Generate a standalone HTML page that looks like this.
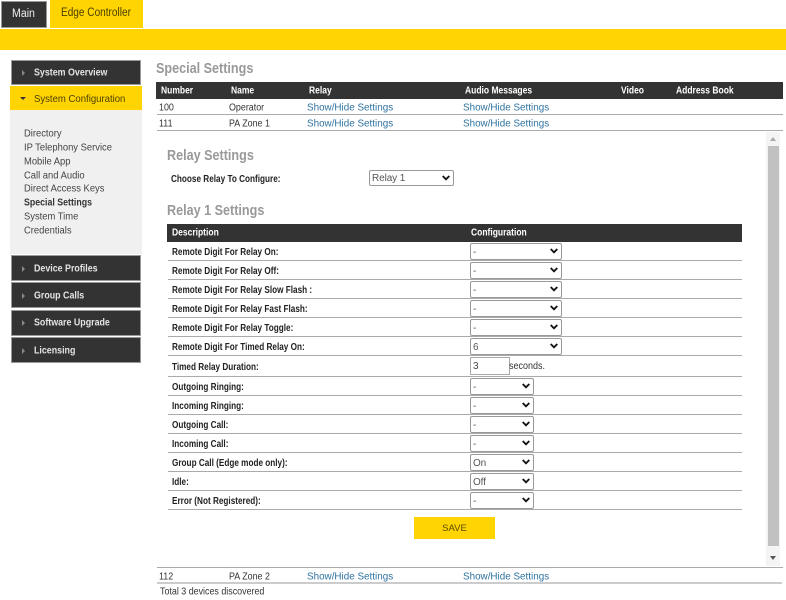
<!DOCTYPE html>
<html><head><meta charset="utf-8"><style>
html,body{margin:0;padding:0;width:786px;height:600px;overflow:hidden;background:#fff}
body{position:relative;font-family:"Liberation Sans",sans-serif;font-size:10px;color:#333}
#w{position:absolute;inset:0;filter:blur(.35px)}
.a{position:absolute;white-space:nowrap}
.t{position:absolute;white-space:nowrap;line-height:14px;font-size:10px;transform-origin:0 50%;transform:translateY(1.5px) scaleX(.89)}
.d{background:#333;color:#ddd}
.y{background:#ffd400}
.nav{position:absolute;left:11px;width:130px;background:#333;border:1px solid #999;box-sizing:border-box;height:24px}
.nt{position:absolute;left:34px;color:#e4e4e4;font-weight:bold;font-size:10.2px;line-height:14px;white-space:nowrap;transform-origin:0 50%;transform:translateY(1.5px) scaleX(.87)}
.tri{position:absolute;left:22px;width:0;height:0;border-left:3px solid #888;border-top:3px solid transparent;border-bottom:3px solid transparent;transform:translateY(1px)}
.m{position:absolute;left:24px;color:#444;font-size:10px;line-height:14px;white-space:nowrap;transform-origin:0 50%;transform:translateY(1.5px) scaleX(.94)}
.h{position:absolute;color:#fff;font-weight:bold;font-size:10px;line-height:14px;white-space:nowrap;transform-origin:0 50%;transform:translateY(1.5px) scaleX(.85)}
.l{position:absolute;height:1px;background:#aaa}
.t.link{color:#2f72a0;transform:translateY(1.5px) scaleX(.987)}
.lb{position:absolute;left:172px;font-weight:bold;color:#222;font-size:10.5px;line-height:14px;white-space:nowrap;transform-origin:0 50%;transform:translateY(0) scaleX(.78)}
.ttl{position:absolute;color:#999;font-weight:bold;font-size:15px;line-height:18px;white-space:nowrap;transform-origin:0 50%;transform:translateY(1px) scaleX(.84)}
select{position:absolute;box-sizing:border-box;height:17px;font-family:"Liberation Sans",sans-serif;font-size:10px;color:#555;background:#fff;border:1px solid #999;border-radius:2px;padding:1px 0 0 2px;margin:0;appearance:none;-webkit-appearance:none;letter-spacing:-.1px}
svg.c{position:absolute;width:8px;height:6px;pointer-events:none}
</style></head><body><div id="w">
<div class="a d" style="left:1px;top:1px;width:46px;height:27px;box-sizing:border-box;border:1px solid #999"></div>
<div class="a" style="left:12px;top:7px;color:#eee;font-size:11.5px;line-height:14px;transform-origin:0 50%;transform:scaleX(.92)">Main</div>
<div class="a y" style="left:50px;top:0;width:93px;height:28px"></div>
<div class="a" style="left:61px;top:6px;color:#4a3f00;font-size:11.5px;line-height:14px;transform-origin:0 50%;transform:scaleX(.875)">Edge Controller</div>
<div class="a y" style="left:0;top:29px;width:786px;height:21px"></div>

<div class="nav" style="top:60px;height:25px"></div>
<div class="tri" style="top:69px"></div><div class="nt" style="top:65px">System Overview</div>
<div class="a y" style="left:10px;top:86px;width:132px;height:24px"></div>
<div class="a" style="left:20px;top:97px;border-top:3px solid #333;border-left:3px solid transparent;border-right:3px solid transparent"></div>
<div class="a" style="left:34px;top:92px;color:#4a3f00;font-size:10.5px;line-height:14px;transform-origin:0 50%;transform:scaleX(.91)">System Configuration</div>
<div class="a" style="left:10px;top:110px;width:132px;height:144px;background:#f0f0f0"></div>
<div class="m" style="top:126px">Directory</div>
<div class="m" style="top:140px">IP Telephony Service</div>
<div class="m" style="top:154px">Mobile App</div>
<div class="m" style="top:168px">Call and Audio</div>
<div class="m" style="top:181px">Direct Access Keys</div>
<div class="m" style="top:195px;font-weight:bold;color:#333;transform:translateY(1.5px) scaleX(.88)">Special Settings</div>
<div class="m" style="top:209px">System Time</div>
<div class="m" style="top:223px">Credentials</div>
<div class="nav" style="top:255px;height:26px"></div><div class="tri" style="top:265px"></div><div class="nt" style="top:261px">Device Profiles</div>
<div class="nav" style="top:282px;height:26px"></div><div class="tri" style="top:292px"></div><div class="nt" style="top:288px">Group Calls</div>
<div class="nav" style="top:310px;height:26px"></div><div class="tri" style="top:319px"></div><div class="nt" style="top:315px">Software Upgrade</div>
<div class="nav" style="top:337px;height:26px"></div><div class="tri" style="top:347px"></div><div class="nt" style="top:343px">Licensing</div>

<div class="ttl" style="left:156px;top:59px">Special Settings</div>
<div class="a d" style="left:156px;top:82px;width:627px;height:17px"></div>
<div class="h" style="left:161px;top:83px">Number</div>
<div class="h" style="left:231px;top:83px">Name</div>
<div class="h" style="left:309px;top:83px">Relay</div>
<div class="h" style="left:465px;top:83px">Audio Messages</div>
<div class="h" style="left:621px;top:83px">Video</div>
<div class="h" style="left:676px;top:83px">Address Book</div>
<div class="t" style="left:159px;top:100px">100</div><div class="t" style="left:229px;top:100px">Operator</div>
<div class="t link" style="left:307px;top:100px">Show/Hide Settings</div><div class="t link" style="left:463px;top:100px">Show/Hide Settings</div>
<div class="l" style="left:157px;top:114px;width:626px"></div>
<div class="t" style="left:159px;top:116px">111</div><div class="t" style="left:229px;top:116px">PA Zone 1</div>
<div class="t link" style="left:307px;top:116px">Show/Hide Settings</div><div class="t link" style="left:463px;top:116px">Show/Hide Settings</div>
<div class="l" style="left:157px;top:130px;width:626px"></div>

<div class="ttl" style="left:167px;top:146px">Relay Settings</div>
<div class="lb" style="left:171px;top:172px">Choose Relay To Configure:</div>
<select style="left:369px;top:170px;width:85px;height:16px"><option>Relay 1</option></select><svg class="c" style="left:442px;top:175px" viewBox="0 0 8 6"><path d="M.7 1L4 4.3 7.3 1" fill="none" stroke="#111" stroke-width="1.8"/></svg>
<div class="ttl" style="left:167px;top:201px">Relay 1 Settings</div>
<div class="a d" style="left:167px;top:224px;width:575px;height:18px"></div>
<div class="h" style="left:172px;top:225px">Description</div>
<div class="h" style="left:471px;top:225px">Configuration</div>

<div class="lb" style="top:245px">Remote Digit For Relay On:</div><select style="left:470px;top:243px;width:92px"><option>-</option></select><svg class="c" style="left:550px;top:248px" viewBox="0 0 8 6"><path d="M.7 1L4 4.3 7.3 1" fill="none" stroke="#111" stroke-width="1.8"/></svg><div class="l" style="left:168px;top:260px;width:574px"></div>
<div class="lb" style="top:264px">Remote Digit For Relay Off:</div><select style="left:470px;top:262px;width:92px"><option>-</option></select><svg class="c" style="left:550px;top:267px" viewBox="0 0 8 6"><path d="M.7 1L4 4.3 7.3 1" fill="none" stroke="#111" stroke-width="1.8"/></svg><div class="l" style="left:168px;top:279px;width:574px"></div>
<div class="lb" style="top:283px">Remote Digit For Relay Slow Flash :</div><select style="left:470px;top:281px;width:92px"><option>-</option></select><svg class="c" style="left:550px;top:286px" viewBox="0 0 8 6"><path d="M.7 1L4 4.3 7.3 1" fill="none" stroke="#111" stroke-width="1.8"/></svg><div class="l" style="left:168px;top:298px;width:574px"></div>
<div class="lb" style="top:302px">Remote Digit For Relay Fast Flash:</div><select style="left:470px;top:300px;width:92px"><option>-</option></select><svg class="c" style="left:550px;top:305px" viewBox="0 0 8 6"><path d="M.7 1L4 4.3 7.3 1" fill="none" stroke="#111" stroke-width="1.8"/></svg><div class="l" style="left:168px;top:317px;width:574px"></div>
<div class="lb" style="top:321px">Remote Digit For Relay Toggle:</div><select style="left:470px;top:319px;width:92px"><option>-</option></select><svg class="c" style="left:550px;top:324px" viewBox="0 0 8 6"><path d="M.7 1L4 4.3 7.3 1" fill="none" stroke="#111" stroke-width="1.8"/></svg><div class="l" style="left:168px;top:336px;width:574px"></div>
<div class="lb" style="top:340px">Remote Digit For Timed Relay On:</div><select style="left:470px;top:338px;width:92px"><option>6</option></select><svg class="c" style="left:550px;top:343px" viewBox="0 0 8 6"><path d="M.7 1L4 4.3 7.3 1" fill="none" stroke="#111" stroke-width="1.8"/></svg><div class="l" style="left:168px;top:355px;width:574px"></div>
<div class="lb" style="top:360px">Timed Relay Duration:</div>
<div class="a" style="left:470px;top:357px;width:40px;height:18px;box-sizing:border-box;border:1px solid #aaa;background:#fff;padding-left:2px;line-height:17px;color:#444">3</div>
<div class="t" style="left:509px;top:359px;transform:translateY(1.2px) scaleX(.9)">seconds.</div><div class="l" style="left:168px;top:376px;width:574px"></div>
<div class="lb" style="top:380px">Outgoing Ringing:</div><select style="left:470px;top:378px;width:64px"><option>-</option></select><svg class="c" style="left:522px;top:383px" viewBox="0 0 8 6"><path d="M.7 1L4 4.3 7.3 1" fill="none" stroke="#111" stroke-width="1.8"/></svg><div class="l" style="left:168px;top:395px;width:574px"></div>
<div class="lb" style="top:399px">Incoming Ringing:</div><select style="left:470px;top:397px;width:64px"><option>-</option></select><svg class="c" style="left:522px;top:402px" viewBox="0 0 8 6"><path d="M.7 1L4 4.3 7.3 1" fill="none" stroke="#111" stroke-width="1.8"/></svg><div class="l" style="left:168px;top:414px;width:574px"></div>
<div class="lb" style="top:418px">Outgoing Call:</div><select style="left:470px;top:416px;width:64px"><option>-</option></select><svg class="c" style="left:522px;top:421px" viewBox="0 0 8 6"><path d="M.7 1L4 4.3 7.3 1" fill="none" stroke="#111" stroke-width="1.8"/></svg><div class="l" style="left:168px;top:433px;width:574px"></div>
<div class="lb" style="top:437px">Incoming Call:</div><select style="left:470px;top:435px;width:64px"><option>-</option></select><svg class="c" style="left:522px;top:440px" viewBox="0 0 8 6"><path d="M.7 1L4 4.3 7.3 1" fill="none" stroke="#111" stroke-width="1.8"/></svg><div class="l" style="left:168px;top:452px;width:574px"></div>
<div class="lb" style="top:456px">Group Call (Edge mode only):</div><select style="left:470px;top:454px;width:64px"><option>On</option></select><svg class="c" style="left:522px;top:459px" viewBox="0 0 8 6"><path d="M.7 1L4 4.3 7.3 1" fill="none" stroke="#111" stroke-width="1.8"/></svg><div class="l" style="left:168px;top:471px;width:574px"></div>
<div class="lb" style="top:475px">Idle:</div><select style="left:470px;top:473px;width:64px"><option>Off</option></select><svg class="c" style="left:522px;top:478px" viewBox="0 0 8 6"><path d="M.7 1L4 4.3 7.3 1" fill="none" stroke="#111" stroke-width="1.8"/></svg><div class="l" style="left:168px;top:490px;width:574px"></div>
<div class="lb" style="top:494px">Error (Not Registered):</div><select style="left:470px;top:492px;width:64px"><option>-</option></select><svg class="c" style="left:522px;top:497px" viewBox="0 0 8 6"><path d="M.7 1L4 4.3 7.3 1" fill="none" stroke="#111" stroke-width="1.8"/></svg><div class="l" style="left:168px;top:509px;width:574px"></div>

<div class="a y" style="left:414px;top:517px;width:81px;height:22px;text-align:center;line-height:23px;color:#5a4c00;font-size:9.5px">SAVE</div>

<div class="a" style="left:766px;top:132px;width:14px;height:434px;background:#f4f4f4"></div>
<div class="a" style="left:768px;top:146px;width:11px;height:400px;background:#c1c1c1"></div>
<div class="a" style="left:770px;top:137px;border-bottom:4px solid #aaa;border-left:3.5px solid transparent;border-right:3.5px solid transparent"></div>
<div class="a" style="left:770px;top:556px;border-top:4px solid #555;border-left:3.5px solid transparent;border-right:3.5px solid transparent"></div>

<div class="l" style="left:157px;top:567px;width:626px"></div>
<div class="t" style="left:159px;top:569px">112</div><div class="t" style="left:229px;top:569px">PA Zone 2</div>
<div class="t link" style="left:307px;top:569px">Show/Hide Settings</div><div class="t link" style="left:463px;top:569px">Show/Hide Settings</div>
<div class="a" style="left:157px;top:582px;width:625px;height:2px;background:#ccc"></div>
<div class="t" style="left:160px;top:584px">Total 3 devices discovered</div>
</div></body></html>
